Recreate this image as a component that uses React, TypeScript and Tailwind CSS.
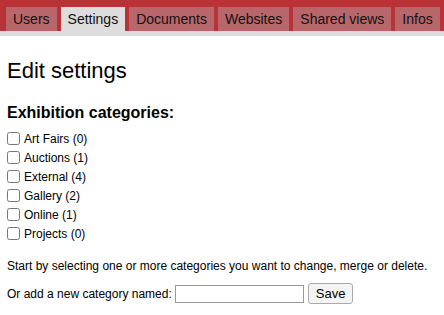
import React from 'react';

const App = () => {
  const tabs = ['Users', 'Settings', 'Documents', 'Websites', 'Shared views', 'Infos'];
  const categories = [
    'Art Fairs (0)',
    'Auctions (1)',
    'External (4)',
    'Gallery (2)',
    'Online (1)',
    'Projects (0)',
  ];

  return (
    <div className="w-[444px] h-[315px] bg-white text-black font-['Liberation_Sans',Arial,sans-serif] overflow-hidden">
      {/* Tab bar */}
      <div className="h-[31px] bg-[#ba3236] flex items-end gap-[4px] pl-[6px]">
        {tabs.map((tab) => (
          <div
            key={tab}
            className={
              tab === 'Settings'
                ? 'h-[24px] px-[7px] text-[14px] leading-[25px] bg-[#dddddd] text-[#111]'
                : 'h-[24px] px-[7px] text-[14px] leading-[25px] bg-[#b9666b] text-[#111]'
            }
          >
            {tab}
          </div>
        ))}
      </div>
      <div className="h-[5px] bg-[#dddddd]" />

      <div className="px-[7px]">
        <h1 className="mt-[22px] text-[22px] leading-[25px]">Edit settings</h1>
        <h2 className="mt-[20px] text-[16px] font-bold leading-[19px]">Exhibition categories:</h2>

        <div className="mt-[7px] flex flex-col">
          {categories.map((c) => (
            <label key={c} className="h-[19px] flex items-center text-[12px]">
              <input type="checkbox" className="w-[13px] h-[13px] mr-[4px]" />
              {c}
            </label>
          ))}
        </div>

        <p className="mt-[16px] text-[12px] leading-[14px]">
          Start by selecting one or more categories you want to change, merge or delete.
        </p>

        <div className="mt-[10px] flex items-center text-[12px]">
          <span>Or add a new category named:</span>
          <input
            type="text"
            className="ml-[3px] w-[129px] h-[18px] border border-[#999] bg-white px-[2px] text-[12px]"
          />
          <button className="ml-[4px] h-[21px] px-[7px] border border-[#aaa] rounded-[3px] bg-[#f4f4f4] text-[13px]">
            Save
          </button>
        </div>
      </div>
    </div>
  );
};

export default App;
